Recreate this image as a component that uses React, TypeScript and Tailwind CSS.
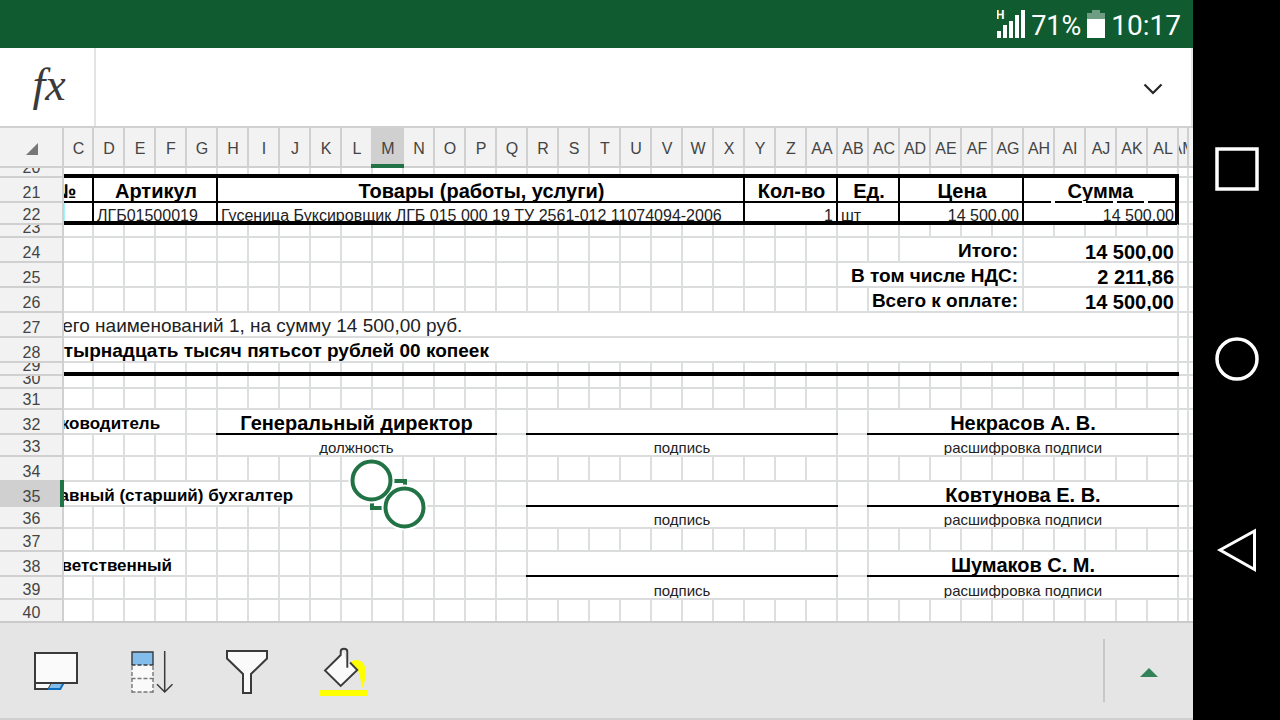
import type { ReactNode } from "react";

type Cell = {
  span?: number;
  text?: string;
  look?: string;
  edge?: string;
  line?: "thin" | "thick" | "dashed";
  extra?: ReactNode;
};

type Row = { n: number; h: string; cells: Cell[]; active?: boolean };

const GRID_EDGE = "border-r-2 border-r-[#dcdfe0]";
const BLACK_EDGE = "border-r-2 border-r-black";
const HEAVY_EDGE = "border-r-4 border-r-black";

const HEAD = "justify-center pl-0.5 text-xl leading-5 font-bold";
const NAME = "justify-center text-xl leading-5 font-bold";
const LABEL = "justify-end px-1 text-[19px] leading-5 font-bold";
const SUM = "justify-end px-[3px] text-xl leading-[18px] font-bold";
const BODY = "px-[3px] text-base leading-[14px] text-[#222]";
const NOTE = "justify-center text-[15px] leading-[14px] text-[#222]";
const SIDE = "text-[17px] leading-[18px] font-bold [&>span]:-ml-6";

const blank = (count: number, line?: Cell["line"]): Cell[] =>
  Array.from({ length: count }, () => ({ line }));

const totals = (before: number, span: number, label: string, sum: string): Cell[] => [
  ...blank(before),
  { span, text: label, look: LABEL },
  { span: 5, text: sum, look: SUM },
  ...blank(2),
];

const signature = (name: string): Cell[] => [
  { span: 10, line: "thin" },
  {},
  { span: 10, text: name, look: NAME, line: "thin" },
  ...blank(2),
];

const signatureNotes: Cell[] = [
  { span: 10, text: "подпись", look: NOTE },
  {},
  { span: 10, text: "расшифровка подписи", look: NOTE },
  ...blank(2),
];

function Selection() {
  return (
    <svg className="absolute -top-[30px] -left-[30px] z-20 h-[88px] w-[96px] max-w-none" viewBox="0 0 96 88" aria-hidden="true">
      <rect x="29" y="29" width="33" height="27" fill="#fff" stroke="#217346" strokeWidth="4" />
      <circle cx="28.5" cy="28.5" r="23" fill="#fff" />
      <circle cx="61.5" cy="55.5" r="23" fill="#fff" />
      <circle cx="28.5" cy="28.5" r="19" fill="#fff" stroke="#217346" strokeWidth="4" />
      <circle cx="61.5" cy="55.5" r="19" fill="#fff" stroke="#217346" strokeWidth="4" />
    </svg>
  );
}

const ROWS: Row[] = [
  { n: 20, h: "h-2", cells: [...blank(36, "thick"), ...blank(2)] },
  {
    n: 21,
    h: "h-[23px]",
    cells: [
      { text: "№", look: "text-xl leading-5 font-bold [&>span]:-ml-2.5", edge: BLACK_EDGE, line: "thin" },
      { span: 4, text: "Артикул", look: HEAD, edge: BLACK_EDGE, line: "thin" },
      { span: 17, text: "Товары (работы, услуги)", look: HEAD, edge: BLACK_EDGE, line: "thin" },
      { span: 3, text: "Кол-во", look: HEAD, edge: BLACK_EDGE, line: "thin" },
      { span: 2, text: "Ед.", look: HEAD, edge: BLACK_EDGE, line: "thin" },
      { span: 4, text: "Цена", look: HEAD, edge: BLACK_EDGE, line: "thin" },
      { span: 5, text: "Сумма", look: HEAD, edge: HEAVY_EDGE, line: "dashed" },
      ...blank(2),
    ],
  },
  {
    n: 22,
    h: "h-5",
    cells: [
      { look: "border-l border-cyan-200", edge: BLACK_EDGE, line: "thick" },
      { span: 4, text: "ЛГБ01500019", look: BODY, edge: BLACK_EDGE, line: "thick" },
      { span: 17, text: "Гусеница Буксировщик ЛГБ 015 000 19 ТУ 2561-012 11074094-2006", look: BODY, edge: BLACK_EDGE, line: "thick" },
      { span: 3, text: "1", look: BODY + " justify-end", edge: BLACK_EDGE, line: "thick" },
      { span: 2, text: "шт", look: BODY, edge: BLACK_EDGE, line: "thick" },
      { span: 4, text: "14 500,00", look: BODY + " justify-end", edge: BLACK_EDGE, line: "thick" },
      { span: 5, text: "14 500,00", look: "justify-end pr-px text-base leading-[14px] text-[#222]", edge: HEAVY_EDGE, line: "thick" },
      ...blank(2),
    ],
  },
  { n: 23, h: "h-[11px]", cells: blank(38) },
  { n: 24, h: "h-[23px]", cells: totals(27, 4, "Итого:", "14 500,00") },
  { n: 25, h: "h-[23px]", cells: totals(25, 6, "В том числе НДС:", "2 211,86") },
  { n: 26, h: "h-[23px]", cells: totals(26, 5, "Всего к оплате:", "14 500,00") },
  {
    n: 27,
    h: "h-[23px]",
    cells: [
      { span: 36, text: "Всего наименований 1, на сумму 14 500,00 руб.", look: "text-[19px] leading-5 text-[#222] [&>span]:-ml-6" },
      ...blank(2),
    ],
  },
  {
    n: 28,
    h: "h-[23px]",
    cells: [
      { span: 36, text: "Четырнадцать тысяч пятьсот рублей 00 копеек", look: "text-[19px] leading-5 font-bold [&>span]:-ml-6" },
      ...blank(2),
    ],
  },
  { n: 29, h: "h-[11px]", cells: [...blank(36, "thick"), ...blank(2)] },
  { n: 30, h: "h-[11px]", cells: blank(38) },
  { n: 31, h: "h-[19px]", cells: blank(38) },
  {
    n: 32,
    h: "h-[23px]",
    cells: [
      { span: 4, text: "Руководитель", look: SIDE },
      {},
      { span: 9, text: "Генеральный директор", look: NAME, line: "thin" },
      {},
      ...signature("Некрасов А. В."),
    ],
  },
  {
    n: 33,
    h: "h-5",
    cells: [...blank(5), { span: 9, text: "должность", look: NOTE }, {}, ...signatureNotes],
  },
  { n: 34, h: "h-[23px]", cells: blank(38) },
  {
    n: 35,
    h: "h-[23px]",
    active: true,
    cells: [
      { span: 8, text: "Главный (старший) бухгалтер", look: SIDE },
      ...blank(2),
      { extra: <Selection /> },
      ...blank(4),
      ...signature("Ковтунова Е. В."),
    ],
  },
  { n: 36, h: "h-5", cells: [...blank(15), ...signatureNotes] },
  { n: 37, h: "h-[21px]", cells: blank(38) },
  {
    n: 38,
    h: "h-[23px]",
    cells: [{ span: 4, text: "Ответственный", look: SIDE }, ...blank(11), ...signature("Шумаков С. М.")],
  },
  { n: 39, h: "h-[21px]", cells: [...blank(15), ...signatureNotes] },
  { n: 40, h: "h-[21px]", cells: blank(38) },
];

const COLUMNS = [
  ..."CDEFGHIJKLMNOPQRSTUVWXYZ".split(""),
  ..."ABCDEFGHIJKLM".split("").map((c) => "A" + c),
];

const LINES = {
  thin: "absolute -left-0.5 -right-0.5 -bottom-0.5 z-10 h-0.5 bg-black",
  thick: "absolute -left-0.5 -right-0.5 -bottom-0.5 z-10 h-1 bg-black",
};

function CellBottom({ line }: { line?: Cell["line"] }) {
  if (!line) return null;
  if (line === "dashed") {
    return (
      <span className="absolute -right-1 -bottom-0.5 left-0 z-10 grid grid-cols-5 bg-white">
        {Array.from({ length: 5 }, (_, i) => (
          <span key={i} className="mr-1 h-0.5 bg-black last:mr-0" />
        ))}
      </span>
    );
  }
  return <span className={LINES[line]} />;
}

function Sheet() {
  return (
    <div className="overflow-hidden border-t-2 border-[#d0d0d0] bg-white">
      <table className="w-full table-fixed border-separate border-spacing-0 text-black">
        <colgroup>
          <col className="w-16" />
          <col className="w-[30px]" />
          {Array.from({ length: 35 }, (_, i) => (
            <col key={i} className="w-[31px]" />
          ))}
          <col className="w-2.5" />
          <col className="w-1" />
        </colgroup>
        <thead>
          <tr>
            <th className="border-r-2 border-b-2 border-[#d0d0d0] bg-[#f2f2f2] p-0">
              <button type="button" aria-label="Выделить всё" className="flex h-[38px] w-full items-center pl-[26px]">
                <svg className="mt-[3px] h-3 w-3" viewBox="0 0 12 12" aria-hidden="true">
                  <path d="M12 0V12H0Z" fill="#777" />
                </svg>
              </button>
            </th>
            {COLUMNS.map((name) => (
              <th
                key={name}
                scope="col"
                className={
                  "relative border-r-2 border-b-2 border-[#d0d0d0] p-0 font-normal text-[#444] " +
                  (name === "M" ? "bg-[#d0d0d0]" : "bg-[#f2f2f2]")
                }
              >
                <div className="flex h-[38px] items-center justify-center overflow-hidden pt-1 pl-px text-base leading-5">
                  {name}
                </div>
                {name === "M" && <span className="absolute -inset-x-0.5 -bottom-0.5 z-10 h-1 bg-[#217346]" />}
              </th>
            ))}
            <th className="border-b-2 border-[#d0d0d0] bg-[#f2f2f2] p-0" />
          </tr>
        </thead>
        <tbody>
          {ROWS.map((row) => (
            <tr key={row.n}>
              <th
                scope="row"
                className={
                  "relative z-20 border-r-2 border-b-2 border-[#d0d0d0] p-0 font-normal text-[#444] " +
                  (row.active ? "bg-[#d0d0d0]" : "bg-[#f2f2f2]")
                }
              >
                <div className={"flex items-end justify-center overflow-hidden pl-px text-base leading-4 " + row.h}>
                  {row.n}
                </div>
                {row.active && <span className="absolute -inset-y-0.5 -right-0.5 z-10 w-1 bg-[#217346]" />}
              </th>
              {row.cells.map((cell, i) => (
                <td
                  key={i}
                  colSpan={cell.span}
                  className={
                    "relative border-b-2 border-b-[#dadcdd] p-0 " +
                    (i === row.cells.length - 1 ? "" : cell.edge ?? GRID_EDGE)
                  }
                >
                  <div className={"flex items-end overflow-hidden whitespace-nowrap " + row.h + " " + (cell.look ?? "")}>
                    {cell.text && <span>{cell.text}</span>}
                  </div>
                  <CellBottom line={cell.line} />
                  {cell.extra}
                </td>
              ))}
            </tr>
          ))}
        </tbody>
      </table>
    </div>
  );
}

function StatusBar() {
  return (
    <header className="flex h-12 items-center justify-end bg-[#105c30] pr-3 font-[Roboto,sans-serif] text-white">
      <svg className="h-12 w-8" viewBox="0 0 32 48" role="img" aria-label="Сигнал сети">
        <text x="-1" y="19" fontSize="12" fontWeight="700" fill="#fff">H</text>
        <path d="M0 31h4v7H0zM6 25h4v13H6zM12 21h4v17h-4zM18 15h4v23h-4zM24 10h4v28h-4z" fill="#fff" />
      </svg>
      <span className="pt-1 pl-0.5 text-[27px] leading-8">71%</span>
      <svg className="mx-1.5 h-12 w-[18px]" viewBox="0 0 18 48" role="img" aria-label="Заряд батареи">
        <path d="M5 10h8v3h5v6H0v-6h5z" fill="#6f9d83" />
        <path d="M0 19h18v19H0z" fill="#fff" />
      </svg>
      <span className="pt-1 text-[28px] leading-8">10:17</span>
    </header>
  );
}

function FormulaBar() {
  return (
    <div className="flex h-[78px] border-r-2 border-[#e4e4e4] bg-white">
      <button
        type="button"
        aria-label="Вставить функцию"
        className="w-24 shrink-0 border-r-2 border-[#e4e4e4] pb-1 pl-1 font-['Liberation_Serif',serif] text-[46px] leading-[52px] text-[#3a3a3a] italic"
      >
        fx
      </button>
      <input aria-label="Строка формул" className="min-w-0 flex-1 px-3 text-xl outline-none" />
      <button type="button" aria-label="Развернуть строку формул" className="flex w-[76px] items-center justify-center pt-1">
        <svg className="h-3 w-5" viewBox="0 0 20 12" aria-hidden="true">
          <path d="M1.500 1.500L10 10L18.500 1.500" fill="none" stroke="#262626" strokeWidth="2.2" />
        </svg>
      </button>
    </div>
  );
}

const TOOLS: { name: string; art: ReactNode }[] = [
  {
    name: "Карточки",
    art: (
      <>
        <path d="M27 59V65H40.5L44 59" fill="#fafafa" stroke="#3a3a3a" strokeWidth="2" />
        <path d="M43.5 59.5L40.5 65H52L55 59.5Z" fill="#83bdec" />
        <path d="M40 65H52.3L55.3 59.5" fill="none" stroke="#106ebe" strokeWidth="2" />
        <rect x="27" y="29" width="42" height="30" fill="#fafafa" stroke="#3a3a3a" strokeWidth="2" />
      </>
    ),
  },
  {
    name: "Заполнить вниз",
    art: (
      <>
        <rect x="28" y="41" width="21" height="27" fill="#fafafa" />
        <path d="M28 42V68.5M49 42V68.5" fill="none" stroke="#797774" strokeWidth="1.4" strokeDasharray="4 2" />
        <path d="M27.5 54.5H50M27.5 68H50" fill="none" stroke="#797774" strokeWidth="1.4" strokeDasharray="4 2" />
        <rect x="28" y="28" width="21" height="13" fill="#83bdec" />
        <path d="M28 41V28H49V41" fill="none" stroke="#3a3a3a" strokeWidth="1.4" />
        <path d="M27.5 41H50" stroke="#3a3a3a" strokeWidth="1.4" strokeDasharray="4 2" />
        <path d="M60.7 27V68M53 60.3L60.7 68L68.5 60.3" fill="none" stroke="#3a3a3a" strokeWidth="1.5" />
      </>
    ),
  },
  {
    name: "Фильтр",
    art: <path d="M27 27H67V34.5L51 50V69H43V50L27 34.5Z" fill="#fafafa" stroke="#3a3a3a" strokeWidth="2" />,
  },
  {
    name: "Цвет заливки",
    art: (
      <>
        <rect x="24" y="66" width="48" height="6" fill="#ff0" />
        <path d="M44.7 31L29 46.5L44.7 62L61.3 46L53.5 38.5L50 36L48 28Z" fill="#fafafa" />
        <path d="M54 38.5C58 34.5 67 35 69 43C70.5 50 69 58 66.7 64C65 60 64.5 52 61.5 46Z" fill="#ff0" />
        <path d="M54 38.5L61.3 46L44.7 62L29 46.5L44.7 31V27.5C44.7 23.8 51.3 23.8 51.3 27.5V43.7" fill="none" stroke="#3a3a3a" strokeWidth="1.9" />
      </>
    ),
  },
];

function Toolbar() {
  return (
    <div className="relative z-30 -mt-0.5 flex flex-1 items-stretch border-t-2 border-b-2 border-t-[#cacaca] border-b-[#cfcfcf] bg-[#e5e5e5] pl-2">
      {TOOLS.map((tool) => (
        <button key={tool.name} type="button" aria-label={tool.name} className="w-24">
          <svg className="h-[94px] w-24" viewBox="0 0 96 94" aria-hidden="true">
            {tool.art}
          </svg>
        </button>
      ))}
      <div className="my-4 ml-auto w-0.5 bg-[#c8c8c8]" />
      <button type="button" aria-label="Показать команды" className="flex w-[88px] items-center justify-center">
        <svg className="mt-1 h-[9px] w-[18px]" viewBox="0 0 18 9" aria-hidden="true">
          <path d="M9 0L18 9H0Z" fill="#33835a" />
        </svg>
      </button>
    </div>
  );
}

function NavBar() {
  return (
    <nav aria-label="Навигация" className="flex w-[87px] shrink-0 flex-col items-center justify-between bg-black pt-[144px] pb-[146px]">
      <button type="button" aria-label="Последние приложения">
        <svg className="block h-12 w-12" viewBox="0 0 48 48" fill="none" stroke="#fff" strokeWidth="3.5">
          <rect x="4" y="5" width="40" height="40" />
        </svg>
      </button>
      <button type="button" aria-label="Главный экран">
        <svg className="block h-12 w-12" viewBox="0 0 48 48" fill="none" stroke="#fff" strokeWidth="3.5">
          <circle cx="24" cy="24" r="20" />
        </svg>
      </button>
      <button type="button" aria-label="Назад">
        <svg className="block h-12 w-12" viewBox="0 0 48 48" fill="none" stroke="#fff" strokeWidth="3">
          <path d="M7 24L41.5 5V43.5Z" />
        </svg>
      </button>
    </nav>
  );
}

export default function App() {
  return (
    <div lang="ru" className="flex min-h-screen bg-white font-['Liberation_Sans',Arial,sans-serif]">
      <main className="flex min-w-0 flex-1 flex-col">
        <StatusBar />
        <FormulaBar />
        <Sheet />
        <Toolbar />
      </main>
      <NavBar />
    </div>
  );
}
